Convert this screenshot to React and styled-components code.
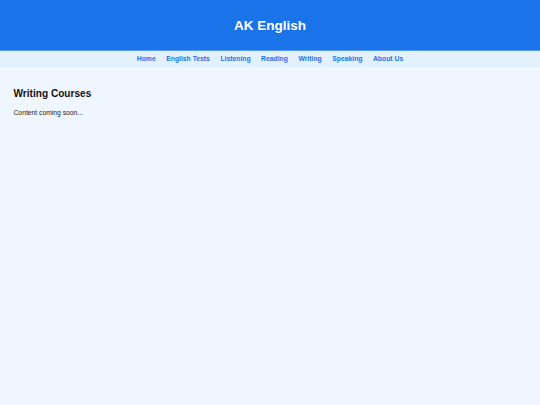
import React from 'react'
import styled, { createGlobalStyle } from 'styled-components'

const GlobalStyle = createGlobalStyle`
  html, body {
    margin: 0;
    padding: 0;
    background: #f0f6ff;
    font-family: "Liberation Sans", Arial, sans-serif;
  }
`

const Page = styled.div`
  min-height: 405px;
  background: #f0f6ff;
`

const Header = styled.header`
  height: 50px;
  background: #1a73e8;
  display: flex;
  align-items: center;
  justify-content: center;
`

const Title = styled.h1`
  margin: 0;
  color: #ffffff;
  font-size: 13.5px;
  font-weight: bold;
`

const Nav = styled.nav`
  height: 15px;
  padding-bottom: 1px;
  background: #e3f0fd;
  border-top: 1px solid #5a9af0;
  display: flex;
  align-items: center;
  justify-content: center;
  gap: 10.5px;
`

const NavLink = styled.a`
  color: #1a73e8;
  font-size: 6.8px;
  font-weight: bold;
  text-decoration: none;
  cursor: pointer;
`

const Main = styled.main`
  padding: 21px 13.5px;
`

const Heading = styled.h2`
  margin: 0 0 10px;
  font-size: 10.1px;
  font-weight: bold;
  color: #111;
`

const Text = styled.p`
  margin: 0;
  font-size: 6.75px;
  color: #222;
`

const links = ['Home', 'English Tests', 'Listening', 'Reading', 'Writing', 'Speaking', 'About Us']

export default function App() {
  return (
    <Page>
      <GlobalStyle />
      <Header>
        <Title>AK English</Title>
      </Header>
      <Nav>
        {links.map((l) => (
          <NavLink key={l}>{l}</NavLink>
        ))}
      </Nav>
      <Main>
        <Heading>Writing Courses</Heading>
        <Text>Content coming soon...</Text>
      </Main>
    </Page>
  )
}
